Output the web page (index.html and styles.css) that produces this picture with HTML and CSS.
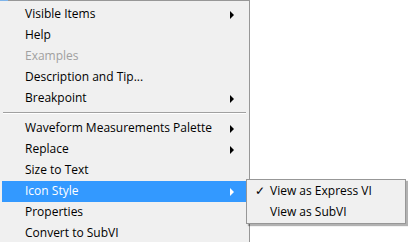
FILE: index.html
```html
<!DOCTYPE html>
<html>
<head>
<meta charset="utf-8">
<link rel="stylesheet" href="styles.css">
</head>
<body>
<div class="stage">
  <div class="focus-mark"></div>
  <div class="menu main">
    <div class="item sub"><span>Visible Items</span><i class="arrow"></i></div>
    <div class="item"><span>Help</span></div>
    <div class="item disabled"><span>Examples</span></div>
    <div class="item"><span>Description and Tip...</span></div>
    <div class="item sub"><span>Breakpoint</span><i class="arrow"></i></div>
    <div class="sep"></div>
    <div class="item sub"><span>Waveform Measurements Palette</span><i class="arrow"></i></div>
    <div class="item sub"><span>Replace</span><i class="arrow"></i></div>
    <div class="item"><span>Size to Text</span></div>
    <div class="item sub active"><span>Icon Style</span><i class="arrow"></i></div>
    <div class="item"><span>Properties</span></div>
    <div class="item"><span>Convert to SubVI</span></div>
  </div>
  <div class="menu submenu">
    <div class="item checked"><span class="check">✓</span><span>View as Express VI</span></div>
    <div class="item"><span class="check"></span><span>View as SubVI</span></div>
  </div>
</div>
</body>
</html>
```
FILE: styles.css
```css
html, body {
  margin: 0;
  padding: 0;
  background: #ffffff;
}
body {
  width: 408px;
  height: 242px;
  overflow: hidden;
  font-family: "Open Sans", "Noto Sans", sans-serif;
  font-size: 12px;
  color: #000;
}
.stage {
  position: relative;
  width: 408px;
  height: 242px;
  overflow: hidden;
}
.focus-mark {
  position: absolute;
  left: 0;
  top: 0;
  width: 8px;
  height: 1px;
  background: #7eb4ea;
}
.menu {
  background: #f0f0f0;
  border: 1px solid #979797;
  box-sizing: border-box;
}
.main {
  width: 250px;
  height: 242px;
  overflow: hidden;
  border-left: none;
  border-bottom: none;
  padding: 3px 3px 0 2px;
}
.item {
  height: 21px;
  display: flex;
  align-items: center;
  padding-left: 23px;
  padding-right: 12px;
  white-space: nowrap;
}
.item span {
  flex: 1;
  position: relative;
  top: -1px;
}
.disabled {
  color: #a0a0a0;
}
.active {
  background: #3399ff;
  color: #ffffff;
}
.arrow {
  width: 0;
  height: 0;
  border-top: 4px solid transparent;
  border-bottom: 4px solid transparent;
  border-left: 4px solid #000;
}
.active .arrow {
  border-left-color: #ffffff;
}
.sep {
  height: 1px;
  margin: 3px 0 4px 1px;
  background: #a0a0a0;
  border-bottom: 1px solid #ffffff;
}
.submenu {
  position: absolute;
  left: 246px;
  top: 179px;
  width: 160px;
  height: 45px;
  padding: 1px 0;
  box-shadow: 2px 2px 1px rgba(0, 0, 0, 0.3);
}
.submenu .item {
  padding-left: 8px;
}
.submenu .check {
  flex: 0 0 15px;
  font-size: 12px;
}
```
